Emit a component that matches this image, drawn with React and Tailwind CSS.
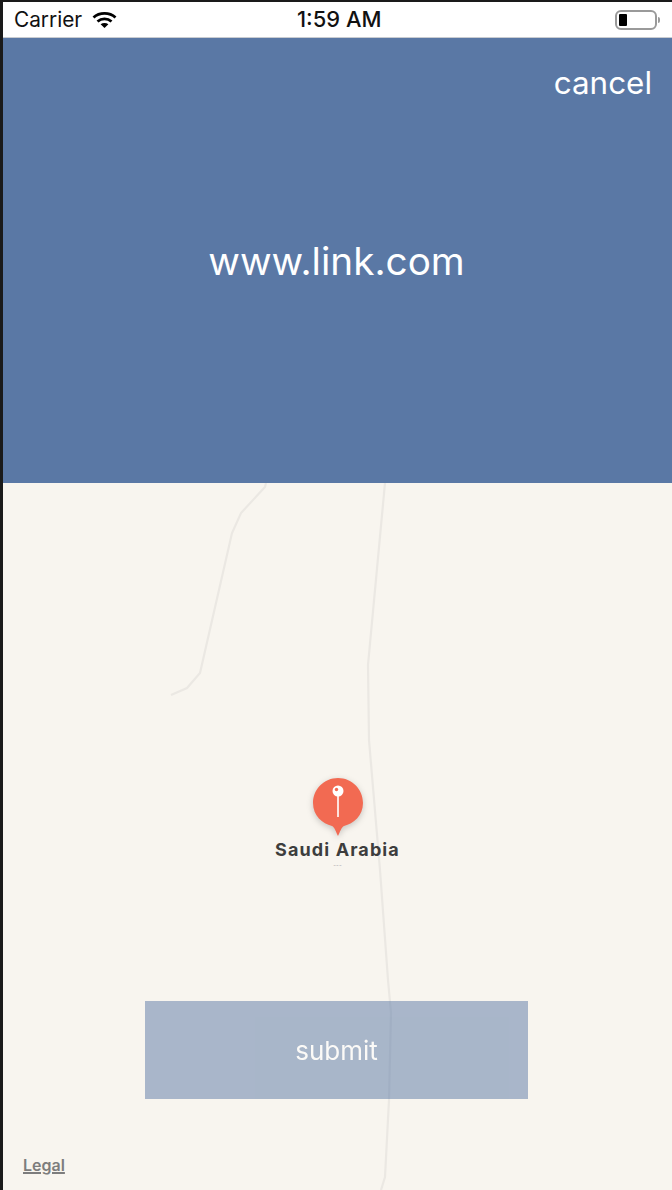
const Roads = () => (
  <svg className="absolute inset-0 w-full h-full" viewBox="3 483 669 707" fill="none">
    <path d="M266 483 L265 487 L241 513 L232 533 L200 673 L187 688 L171 695" stroke="#ebe8e3" strokeWidth="2.2" />
    <path d="M385 483 L368 665 L369 740 L380 870 L388 980 L391 1013 L389 1100 L385 1177 L381 1190" stroke="#ebe8e3" strokeWidth="2.2" />
  </svg>
);

const Pin = () => (
  <svg width="60" height="68" viewBox="0 0 60 68" className="drop-shadow-[0_2px_3px_rgba(0,0,0,0.2)]">
    <path d="M30 5 C43.8 5 55 16.2 55 30 C55 43 45.5 50.5 36 53 C33.5 54 32 59 30 63 C28 59 26.5 54 24 53 C14.5 50.5 5 43 5 30 C5 16.2 16.2 5 30 5 Z" fill="#f26a52" />
    <rect x="29.2" y="20" width="1.6" height="24" fill="#fff" />
    <circle cx="30" cy="18" r="5.5" fill="#fff" />
    <circle cx="28.5" cy="16.5" r="1.7" fill="#f26a52" />
  </svg>
);

const StatusBar = () => (
  <div className="h-9 bg-white border-b border-[#c9ccd1] flex items-center justify-between pl-[11px] pr-[12px] text-[#111] shrink-0 relative">
    <div className="flex items-center gap-[10px]">
      <span className="text-[20.8px]">Carrier</span>
      <svg width="25" height="18" viewBox="0 0 25 18" fill="none" stroke="#000" strokeWidth="2.8">
        <path d="M1.5 6.5 C7.5 1 17.5 1 23.5 6.5" />
        <path d="M5.5 10.5 C9.5 7 15.5 7 19.5 10.5" />
        <path d="M12.5 17 L8.6 13.2 C10.8 11.6 14.2 11.6 16.4 13.2 Z" fill="#000" stroke="none" />
      </svg>
    </div>
    <span className="absolute left-[294px] text-[21.9px] font-medium">1:59 AM</span>
    <div className="flex items-center gap-[1px]">
      <div className="w-[42px] h-[20px] border-2 border-[#9a9a9a] rounded-[6px] p-[2px]">
        <div className="w-[8px] h-full bg-black rounded-[1px]" />
      </div>
      <div className="w-[2px] h-[6px] bg-[#9a9a9a] rounded-r-sm" />
    </div>
  </div>
);

export default function App() {
  return (
    <div className="w-[672px] h-[1190px] bg-[#1a1a1a] pl-[3px] pt-[2px] flex flex-col overflow-hidden font-['Inter',sans-serif]">
      <StatusBar />
      <div className="h-[445px] bg-[#5a78a5] text-white flex flex-col shrink-0">
        <div className="flex justify-end pt-[23px] pr-[20px]">
          <button className="text-[31.4px] leading-[44px]">cancel</button>
        </div>
        <div className="flex justify-center pt-[132px] pr-[2px]">
          <span className="text-[38.7px] leading-[48px]">www.link.com</span>
        </div>
      </div>
      <div className="relative flex-1 bg-[#f8f5ef] flex flex-col items-center pr-[2px]">
        <Roads />
        <div className="relative flex flex-col items-center mt-[290px] ml-[2px]">
          <Pin />
          <span className="text-[18px] leading-[22px] font-bold tracking-[1.1px] text-[#3d3d3d] -mt-[2px]">Saudi Arabia</span>
          <span className="text-[6px] leading-[6px] text-[#aaa] mt-[1px]">---</span>
        </div>
        <button className="relative w-[383px] h-[98px] mt-[133px] bg-[#5a78a5] opacity-50 text-white text-[26px]">
          submit
        </button>
        <span className="absolute left-[20px] bottom-[15px] text-[16px] leading-[20px] font-semibold text-[#7d7d7d] underline decoration-2">Legal</span>
      </div>
    </div>
  );
}
